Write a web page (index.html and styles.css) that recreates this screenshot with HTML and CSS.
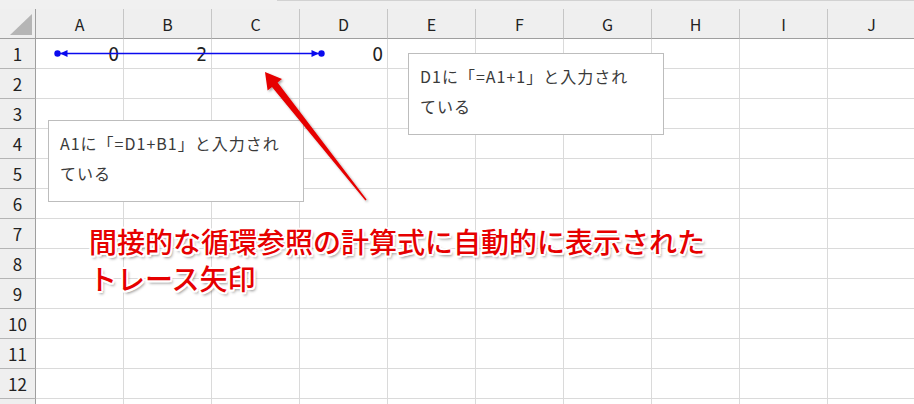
FILE: index.html
```html
<!DOCTYPE html>
<html lang="ja">
<head>
<meta charset="utf-8">
<title>トレース矢印</title>
<link rel="stylesheet" href="styles.css">
</head>
<body>
<div class="sheet">
  <div class="topstrip"><div class="gap"></div><div class="fbar"></div></div>
  <div class="grid">
    <div class="corner"><div class="tri"></div></div>
    <div class="ch">A</div><div class="ch">B</div><div class="ch">C</div><div class="ch">D</div><div class="ch">E</div><div class="ch">F</div><div class="ch">G</div><div class="ch">H</div><div class="ch">I</div><div class="ch">J</div>

    <div class="rh">1</div><div class="c num">0</div><div class="c num">2</div><div class="c"></div><div class="c num">0</div><div class="c"></div><div class="c"></div><div class="c"></div><div class="c"></div><div class="c"></div><div class="c"></div>
    <div class="rh">2</div><div class="c"></div><div class="c"></div><div class="c"></div><div class="c"></div><div class="c"></div><div class="c"></div><div class="c"></div><div class="c"></div><div class="c"></div><div class="c"></div>
    <div class="rh">3</div><div class="c"></div><div class="c"></div><div class="c"></div><div class="c"></div><div class="c"></div><div class="c"></div><div class="c"></div><div class="c"></div><div class="c"></div><div class="c"></div>
    <div class="rh">4</div><div class="c"></div><div class="c"></div><div class="c"></div><div class="c"></div><div class="c"></div><div class="c"></div><div class="c"></div><div class="c"></div><div class="c"></div><div class="c"></div>
    <div class="rh">5</div><div class="c"></div><div class="c"></div><div class="c"></div><div class="c"></div><div class="c"></div><div class="c"></div><div class="c"></div><div class="c"></div><div class="c"></div><div class="c"></div>
    <div class="rh">6</div><div class="c"></div><div class="c"></div><div class="c"></div><div class="c"></div><div class="c"></div><div class="c"></div><div class="c"></div><div class="c"></div><div class="c"></div><div class="c"></div>
    <div class="rh">7</div><div class="c"></div><div class="c"></div><div class="c"></div><div class="c"></div><div class="c"></div><div class="c"></div><div class="c"></div><div class="c"></div><div class="c"></div><div class="c"></div>
    <div class="rh">8</div><div class="c"></div><div class="c"></div><div class="c"></div><div class="c"></div><div class="c"></div><div class="c"></div><div class="c"></div><div class="c"></div><div class="c"></div><div class="c"></div>
    <div class="rh">9</div><div class="c"></div><div class="c"></div><div class="c"></div><div class="c"></div><div class="c"></div><div class="c"></div><div class="c"></div><div class="c"></div><div class="c"></div><div class="c"></div>
    <div class="rh">10</div><div class="c"></div><div class="c"></div><div class="c"></div><div class="c"></div><div class="c"></div><div class="c"></div><div class="c"></div><div class="c"></div><div class="c"></div><div class="c"></div>
    <div class="rh">11</div><div class="c"></div><div class="c"></div><div class="c"></div><div class="c"></div><div class="c"></div><div class="c"></div><div class="c"></div><div class="c"></div><div class="c"></div><div class="c"></div>
    <div class="rh">12</div><div class="c"></div><div class="c"></div><div class="c"></div><div class="c"></div><div class="c"></div><div class="c"></div><div class="c"></div><div class="c"></div><div class="c"></div><div class="c"></div>
    <div class="rh"></div><div class="c"></div><div class="c"></div><div class="c"></div><div class="c"></div><div class="c"></div><div class="c"></div><div class="c"></div><div class="c"></div><div class="c"></div><div class="c"></div>
  </div>

  <div class="note note-d1">D1に「=A1+1」と入力され<br>ている</div>
  <div class="note note-a1">A1に「=D1+B1」と入力され<br>ている</div>

  <div class="caption">間接的な循環参照の計算式に自動的に表示された<br>トレース矢印</div>

  <svg class="overlay" width="914" height="404" viewBox="0 0 914 404" xmlns="http://www.w3.org/2000/svg">
    <defs>
      <filter id="sh" x="-20%" y="-20%" width="140%" height="140%">
        <feDropShadow dx="1.5" dy="1.5" stdDeviation="1.2" flood-color="#000" flood-opacity="0.35"/>
      </filter>
    </defs>
    <line x1="57.5" y1="53.5" x2="321.5" y2="53.5" stroke="#0a0aee" stroke-width="1.6"/>
    <circle cx="57.5" cy="53.5" r="3.2" fill="#0a0aee"/>
    <polygon points="60,53.5 67.5,50 67.5,57" fill="#0a0aee"/>
    <circle cx="321.5" cy="53.5" r="3.2" fill="#0a0aee"/>
    <polygon points="319,53.5 311.5,50 311.5,57" fill="#0a0aee"/>
    <polygon filter="url(#sh)" fill="#e60000"
      points="265,72 282,79 277.6,82.6 366.6,199.6 365.4,200.4 272,87 267.6,90.4"/>
  </svg>
</div>
</body>
</html>
```

FILE: styles.css
```css
html, body {
  margin: 0;
  padding: 0;
  background: #ffffff;
}

.sheet {
  position: relative;
  width: 914px;
  height: 404px;
  overflow: hidden;
  font-family: "Noto Sans CJK JP", "Noto Sans", sans-serif;
}

.topstrip {
  display: flex;
  height: 9px;
  background: #f0f0f0;
}

.topstrip .gap {
  width: 277px;
}

.topstrip .fbar {
  flex: 1;
  border-top: 1px solid #d2d2d2;
}

.grid {
  display: grid;
  grid-template-columns: 36px repeat(10, 88px);
  grid-template-rows: 30px repeat(13, 30px);
}

.corner {
  box-sizing: border-box;
  background: #efefef;
  border-right: 1px solid #9f9f9f;
  border-bottom: 1px solid #9f9f9f;
  display: flex;
  justify-content: flex-end;
  align-items: flex-end;
  padding: 0 3px 3px 0;
}

.tri {
  width: 22px;
  height: 21px;
  background: #b5b5b5;
  clip-path: polygon(100% 0, 100% 100%, 0 100%);
}

.ch {
  box-sizing: border-box;
  background: #efefef;
  border-right: 1px solid #c6c6c6;
  border-bottom: 1px solid #9f9f9f;
  display: flex;
  align-items: center;
  justify-content: center;
  font-size: 16px;
  color: #222222;
  padding-top: 1px;
}

.rh {
  box-sizing: border-box;
  background: #efefef;
  border-right: 1px solid #9f9f9f;
  border-bottom: 1px solid #b4b4b4;
  display: flex;
  align-items: center;
  justify-content: center;
  font-size: 17px;
  color: #222222;
}

.c {
  box-sizing: border-box;
  border-right: 1px solid #dadada;
  border-bottom: 1px solid #dadada;
}

.num {
  display: flex;
  align-items: center;
  justify-content: flex-end;
  padding-right: 4px;
  font-family: "Liberation Sans Narrow", "DejaVu Sans Condensed", "Liberation Sans", sans-serif;
  font-size: 19px;
  color: #222222;
}

.note {
  position: absolute;
  box-sizing: border-box;
  width: 256px;
  height: 82px;
  background: #ffffff;
  border: 1px solid #bdbdbd;
  padding: 7px 11px;
  font-size: 16px;
  letter-spacing: 1px;
  line-height: 30px;
  color: #3a3a3a;
  white-space: nowrap;
}

.note-d1 {
  left: 408px;
  top: 53px;
}

.note-a1 {
  left: 48px;
  top: 120px;
}

.caption {
  position: absolute;
  left: 89px;
  top: 223px;
  font-size: 28px;
  line-height: 37px;
  font-weight: 500;
  color: #e60000;
  white-space: nowrap;
  text-shadow:
    -1.5px -1.5px 0 #fff, 1.5px -1.5px 0 #fff,
    -1.5px 1.5px 0 #fff, 1.5px 1.5px 0 #fff,
    0 2px 0 #fff, 2px 0 0 #fff, -2px 0 0 #fff, 0 -2px 0 #fff,
    2px 3px 3px rgba(0, 0, 0, 0.45);
}

.overlay {
  position: absolute;
  left: 0;
  top: 0;
  pointer-events: none;
}
```
